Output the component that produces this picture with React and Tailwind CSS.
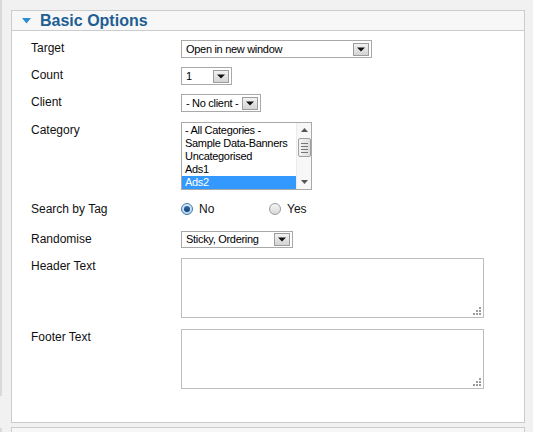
import React from "react";

function Arrow() {
  return (
    <span className="w-[16px] h-[13px] mr-[2px] flex items-center justify-center border border-[#9c9c9c] bg-gradient-to-b from-[#f2f2f2] to-[#d4d4d4] shrink-0">
      <svg width="8" height="5" viewBox="0 0 8 5">
        <path d="M0 0.5 L8 0.5 L4 4.5 Z" fill="#111" />
      </svg>
    </span>
  );
}

function FakeSelect({ value, width, height = "h-[18px]" }) {
  return (
    <div className={`${width} ${height} border border-[#a9a9a9] bg-white flex items-center`}>
      <span className="flex-1 pl-[4px] text-[11px] tracking-[-0.3px] leading-[13px] text-black whitespace-nowrap overflow-hidden">{value}</span>
      <Arrow />
    </div>
  );
}

function ListBox() {
  const items = ["- All Categories -", "Sample Data-Banners", "Uncategorised", "Ads1", "Ads2"];
  return (
    <div className="w-[131px] h-[68px] border border-[#a9a9a9] bg-white flex">
      <div className="flex-1 pt-[1px] overflow-hidden">
        {items.map((it) => (
          <div
            key={it}
            className={
              it === "Ads2"
                ? "h-[13px] pl-[3px] text-[11px] tracking-[-0.3px] leading-[13px] bg-[#3399ff] text-white whitespace-nowrap"
                : "h-[13px] pl-[3px] text-[11px] tracking-[-0.3px] leading-[13px] text-black whitespace-nowrap"
            }
          >
            {it}
          </div>
        ))}
      </div>
      <div className="w-[15px] bg-[#f7f7f7] border-l border-[#ececec] flex flex-col items-center">
        <svg width="7" height="4" viewBox="0 0 7 4" className="mt-[5px]">
          <path d="M0 4 L7 4 L3.5 0 Z" fill="#555" />
        </svg>
        <div className="mt-[6px] w-[13px] h-[19px] border border-[#a0a0a0] rounded-[2px] bg-gradient-to-r from-[#f4f4f4] to-[#dedede] flex flex-col items-center justify-center gap-[2px]">
          <span className="w-[7px] h-[1px] bg-[#777]" />
          <span className="w-[7px] h-[1px] bg-[#777]" />
          <span className="w-[7px] h-[1px] bg-[#777]" />
          <span className="w-[7px] h-[1px] bg-[#777]" />
        </div>
        <div className="flex-1" />
        <svg width="7" height="4" viewBox="0 0 7 4" className="mb-[5px]">
          <path d="M0 0 L7 0 L3.5 4 Z" fill="#555" />
        </svg>
      </div>
    </div>
  );
}

function Radio({ checked }) {
  return (
    <span
      className={
        checked
          ? "w-[12px] h-[12px] rounded-full border border-[#3d7bad] bg-gradient-to-b from-[#dbe9f5] to-[#b7d3ec] flex items-center justify-center"
          : "w-[12px] h-[12px] rounded-full border border-[#9a9a9a] bg-gradient-to-b from-[#f6f6f6] to-[#d8d8d8]"
      }
    >
      {checked && <span className="w-[6px] h-[6px] rounded-full bg-gradient-to-b from-[#2a6fb0] to-[#0f3e73]" />}
    </span>
  );
}

function TextBox() {
  return (
    <div className="w-[303px] h-[60px] border border-[#bdbdbd] bg-white flex items-end justify-end">
      <svg width="9" height="9" viewBox="0 0 9 9" className="mr-[2px] mb-[2px]">
        <rect x="7" y="1" width="2" height="2" fill="#9a9a9a" />
        <rect x="4" y="4" width="2" height="2" fill="#9a9a9a" />
        <rect x="7" y="4" width="2" height="2" fill="#9a9a9a" />
        <rect x="1" y="7" width="2" height="2" fill="#9a9a9a" />
        <rect x="4" y="7" width="2" height="2" fill="#9a9a9a" />
        <rect x="7" y="7" width="2" height="2" fill="#9a9a9a" />
      </svg>
    </div>
  );
}

function Row({ label, mt, children }) {
  return (
    <div className={`flex items-start ${mt}`}>
      <div className="w-[150px] shrink-0 text-[12px] leading-[16px] text-[#111]">{label}</div>
      {children}
    </div>
  );
}

export default function App() {
  return (
    <div className="w-[533px] h-[432px] bg-[#f1f1f1] overflow-hidden flex font-['Liberation_Sans',Arial,sans-serif]">
      {/* left edge strip */}
      <div className="w-[11px] shrink-0 flex flex-col">
        <div className="w-[2px] h-[396px] bg-[#d9d9d9]" />
        <div className="w-[2px] mt-[32px] flex-1 bg-[#d9d9d9]" />
      </div>

      <div className="w-[514px] shrink-0 pt-[10px]">
        {/* Basic Options panel */}
        <div className="border border-[#cccccc] bg-white">
          <div className="h-[20px] bg-[#f7f7f7] border-b border-[#cccccc] flex items-center pl-[10px]">
            <svg width="9" height="6" viewBox="0 0 9 6" className="mr-[9px]">
              <path d="M0 0 L9 0 L4.5 5.5 Z" fill="#2d8ccf" />
            </svg>
            <span className="text-[16px] leading-[18px] font-bold text-[#1d5f94]">Basic Options</span>
          </div>

          <div className="h-[391px] pl-[19px] pt-[9px]">
            <Row label="Target" mt="mt-0">
              <FakeSelect value="Open in new window" width="w-[191px]" />
            </Row>
            <Row label="Count" mt="mt-[9px]">
              <FakeSelect value="1" width="w-[51px]" />
            </Row>
            <Row label="Client" mt="mt-[9px]">
              <FakeSelect value="- No client -" width="w-[80px]" />
            </Row>
            <Row label="Category" mt="mt-[10px]">
              <ListBox />
            </Row>
            <Row label="Search by Tag" mt="mt-[11px]">
              <div className="h-[16px] flex items-center text-[12px] text-[#111]">
                <Radio checked />
                <span className="ml-[6px] w-[70px]">No</span>
                <Radio />
                <span className="ml-[6px]">Yes</span>
              </div>
            </Row>
            <Row label="Randomise" mt="mt-[14px]">
              <FakeSelect value="Sticky, Ordering" width="w-[112px]" height="h-[17px]" />
            </Row>
            <Row label="Header Text" mt="mt-[10px]">
              <TextBox />
            </Row>
            <Row label="Footer Text" mt="mt-[11px]">
              <TextBox />
            </Row>
          </div>
        </div>

        {/* next panel, cut off */}
        <div className="mt-[4px] border border-[#cccccc] bg-[#f7f7f7] h-[30px]" />
      </div>
    </div>
  );
}
